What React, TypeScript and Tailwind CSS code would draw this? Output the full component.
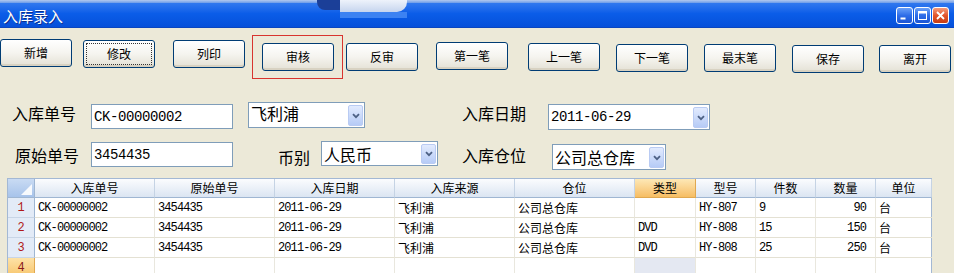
import React from "react";

const CJK = "font-['Noto_Sans_CJK_SC',sans-serif]";
const MONO = "font-['Liberation_Mono','Noto_Sans_CJK_SC',monospace]";

const buttons: { t: string; c: string; focus?: boolean }[] = [
  { t: "新增", c: "ml-0 mt-0" },
  { t: "修改", c: "ml-[11px] mt-[1px]", focus: true },
  { t: "列印", c: "ml-[18px] mt-[1px]" },
  { t: "审核", c: "ml-[17px] mt-[4px]" },
  { t: "反审", c: "ml-[12px] mt-[4px]" },
  { t: "第一笔", c: "ml-[18px] mt-[3px]" },
  { t: "上一笔", c: "ml-[20px] mt-[4px]" },
  { t: "下一笔", c: "ml-[16px] mt-[5px]" },
  { t: "最末笔", c: "ml-[16px] mt-[5px]" },
  { t: "保存", c: "ml-[16px] mt-[6px]" },
  { t: "离开", c: "ml-[15px] mt-[6px]" },
];

function XPButton({ t, c, focus }: { t: string; c: string; focus?: boolean }) {
  return (
    <div
      className={`relative shrink-0 w-[72px] h-[28px] rounded-[3px] border border-[#003c74] bg-linear-to-b from-[#ffffff] via-[#f5f4ef] to-[#e4e1d5] shadow-[inset_0_-2px_0_#d8d2c2] flex items-center justify-center text-[12px] leading-[14px] text-black ${CJK} ${c}`}
    >
      {focus && <div className="absolute inset-[2px] border border-dotted border-[#333]" />}
      <span>{t}</span>
    </div>
  );
}

function Chevron() {
  return (
    <svg width="8" height="6" viewBox="0 0 8 6">
      <path d="M1 1.2 L4 4.2 L7 1.2" stroke="#4d6185" strokeWidth="1.8" fill="none" />
    </svg>
  );
}

function Combo({ text, cls, mono, tcls }: { text: string; cls: string; mono?: boolean; tcls?: string }) {
  return (
    <div className={`relative shrink-0 bg-white border border-[#7f9db9] flex items-center ${cls}`}>
      {mono ? (
        <span className={`pl-[2px] text-[14px] tracking-[-0.4px] leading-[16px] ${MONO}`}>{text}</span>
      ) : (
        <span className={`pl-[2px] text-[16px] leading-[18px] ${CJK} ${tcls ?? ""}`}>{text}</span>
      )}
      <div className="absolute right-[1px] top-[2px] bottom-[1px] w-[15px] rounded-[2px] border border-[#b9cbf3] bg-linear-to-b from-[#e2ebfe] to-[#b6cbf6] flex items-center justify-center">
        <Chevron />
      </div>
    </div>
  );
}

function TextBox({ text, cls }: { text: string; cls: string }) {
  return (
    <div className={`shrink-0 bg-white border border-[#7f9db9] flex items-center ${cls}`}>
      <span className={`pl-[2px] text-[14px] tracking-[-0.4px] leading-[16px] ${MONO}`}>{text}</span>
    </div>
  );
}

function Label({ t, cls }: { t: string; cls: string }) {
  return <div className={`shrink-0 text-[16px] leading-[16px] text-black ${CJK} ${cls}`}>{t}</div>;
}

const headers = ["入库单号", "原始单号", "入库日期", "入库来源", "仓位", "类型", "型号", "件数", "数量", "单位"];

const rows = [
  ["CK-00000002", "3454435", "2011-06-29", "飞利浦", "公司总仓库", "", "HY-807", "9", "90", "台"],
  ["CK-00000002", "3454435", "2011-06-29", "飞利浦", "公司总仓库", "DVD", "HY-808", "15", "150", "台"],
  ["CK-00000002", "3454435", "2011-06-29", "飞利浦", "公司总仓库", "DVD", "HY-808", "25", "250", "台"],
  ["", "", "", "", "", "", "", "", "", ""],
];

const isCJK = (s: string) => /[\u4e00-\u9fff]/.test(s);

function WinBtn({ kind }: { kind: "min" | "max" | "close" }) {
  const bg =
    kind === "close"
      ? "bg-linear-to-b from-[#f39a7a] via-[#e2552c] to-[#c63c12]"
      : "bg-linear-to-b from-[#6aa0f8] via-[#2e6de8] to-[#1c55d4]";
  return (
    <div className={`w-[17px] h-[17px] rounded-[3px] border border-white flex items-center justify-center ${bg}`}>
      <svg width="11" height="11" viewBox="0 0 11 11">
        {kind === "min" && <rect x="1.5" y="7.5" width="5" height="2" fill="white" />}
        {kind === "max" && (
          <>
            <rect x="1.5" y="1.5" width="8" height="8" fill="none" stroke="white" strokeWidth="1" />
            <rect x="1.5" y="1.5" width="8" height="2" fill="white" />
          </>
        )}
        {kind === "close" && (
          <path d="M2 2 L9 9 M9 2 L2 9" stroke="white" strokeWidth="1.8" fill="none" />
        )}
      </svg>
    </div>
  );
}

export default function App() {
  return (
    <div className={`relative w-[954px] h-[273px] overflow-hidden bg-[#ece9d8] ${CJK}`}>
      {/* Title bar */}
      <div className="relative h-[28px] bg-linear-to-b from-[#3a80f0] via-[#0b5de8] to-[#0650da] flex items-center justify-between border-b border-[#0a46c0]">
        <div className="absolute left-0 top-0 w-full h-[3px] bg-linear-to-b from-[#b3c9ee] to-[#6c9be8]" />
        <div className="absolute left-[317px] top-0 w-[23px] h-[10px] rounded-bl-[8px] bg-[#1b3f98]" />
        <div className="absolute left-[340px] top-0 w-[67px] h-[12px] rounded-br-[10px] bg-linear-to-b from-[#eef3fb] to-[#c6d5ee]" />
        <div className="absolute left-[340px] top-[12px] w-[67px] h-[6px] bg-[#3c82f2]" />
        <span className="relative pl-[3px] pt-[4px] text-[15px] leading-[18px] text-white [text-shadow:1px_1px_0_#0a2f90]">
          入库录入
        </span>
        <div className="relative flex gap-[1px] pr-[5px] pt-[4px]">
          <WinBtn kind="min" />
          <WinBtn kind="max" />
          <WinBtn kind="close" />
        </div>
      </div>

      {/* Toolbar buttons */}
      <div className="h-[46px] pt-[11px] flex items-start">
        {buttons.map((b) => (
          <XPButton key={b.t} t={b.t} c={b.c} focus={b.focus} />
        ))}
      </div>
      <div className="absolute left-[252px] top-[35px] w-[91px] h-[44px] border border-[#d8342f]" />

      {/* Form row 1 */}
      <div className="mt-[28px] h-[28px] flex items-start">
        <Label t="入库单号" cls="ml-[12px] w-[79px] mt-[3px]" />
        <TextBox text="CK-00000002" cls="w-[142px] h-[25px] mt-[2px]" />
        <Combo text="飞利浦" cls="ml-[15px] w-[117px] h-[26px]" tcls="pb-[4px]" />
        <Label t="入库日期" cls="ml-[97px] w-[86px] mt-[3px]" />
        <Combo text="2011-06-29" mono cls="w-[162px] h-[26px] mt-[2px]" />
      </div>

      {/* Form row 2 */}
      <div className="mt-[11px] h-[29px] flex items-start">
        <Label t="原始单号" cls="ml-[15px] w-[76px] mt-[6px]" />
        <TextBox text="3454435" cls="w-[142px] h-[25px] mt-[1px]" />
        <Label t="币别" cls="ml-[45px] w-[43px] mt-[8px]" />
        <Combo text="人民币" cls="w-[117px] h-[25px]" />
        <Label t="入库仓位" cls="ml-[24px] w-[90px] mt-[6px]" />
        <Combo text="公司总仓库" cls="w-[114px] h-[26px] mt-[3px]" />
      </div>

      {/* Grid */}
      <div className="mt-[8px] ml-[7px] w-[925px] border-t border-l border-r border-[#a3b8d4] bg-white">
        <div className="grid grid-cols-[27px_120px_120px_120px_120px_120px_61px_60px_60px_60px_56px]">
          {/* header */}
          <div className="relative h-[19px] bg-linear-to-b from-[#c9dbf3] to-[#a7c3ea] border-r border-b border-[#9fb6d2]">
            <div className="absolute right-[2px] bottom-[2px] w-0 h-0 border-l-[11px] border-l-transparent border-b-[11px] border-b-white/90" />
          </div>
          {headers.map((h) => (
            <div
              key={h}
              className={`h-[19px] flex items-center justify-center text-[12px] leading-[14px] text-black border-r border-b ${
                h === "类型"
                  ? "bg-linear-to-b from-[#fde8b6] to-[#f6bd62] border-r-[#e0a850] border-b-[#e0a850]"
                  : "bg-linear-to-b from-[#fbfcfe] to-[#dbe5f2] border-r-[#c5d3e4] border-b-[#9fb6d2]"
              }`}
            >
              {h}
            </div>
          ))}
          {/* rows */}
          {rows.map((r, ri) => (
            <React.Fragment key={ri}>
              <div
                className={`h-[20px] flex items-center justify-center text-[12px] border-r border-b ${MONO} ${
                  ri === 3
                    ? "bg-linear-to-b from-[#fde2a6] to-[#f7c46a] border-r-[#e0a850] border-b-[#e0a850] text-[#8a1a1a]"
                    : "bg-[#e3ebf7] border-r-[#9fb6d2] border-b-[#c8d5e6] text-[#b01818]"
                }`}
              >
                {ri + 1}
              </div>
              {r.map((v, ci) => (
                <div
                  key={ci}
                  className={`h-[20px] flex items-center border-r border-b border-r-[#e9e7de] border-b-[#e4e1d3] ${
                    ci === 8 ? "justify-end pr-[9px]" : "pl-[3px]"
                  } ${ri === 3 && ci === 5 ? "bg-[#e4e8f2]" : ""} ${ci === 9 ? "border-r-0" : ""}`}
                >
                  {v !== "" &&
                    (isCJK(v) ? (
                      <span className={`text-[12px] leading-[14px] text-black ${CJK}`}>{v}</span>
                    ) : (
                      <span className={`text-[12px] tracking-[-0.9px] leading-[14px] text-black ${MONO}`}>{v}</span>
                    ))}
                </div>
              ))}
            </React.Fragment>
          ))}
        </div>
      </div>
    </div>
  );
}
